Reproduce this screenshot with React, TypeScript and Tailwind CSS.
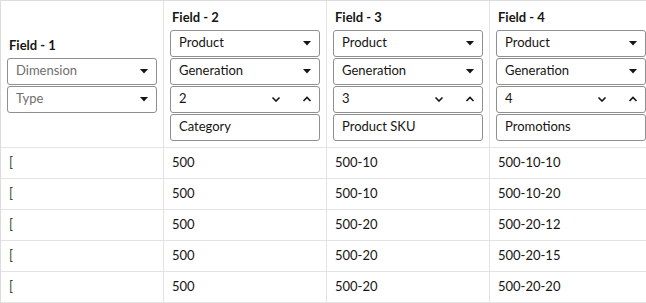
import React from 'react';

type Field = {
  label: string;
  rows: { kind: 'select' | 'number' | 'text'; value: string; placeholder?: boolean }[];
};

const fields: Field[] = [
  {
    label: 'Field - 1',
    rows: [
      { kind: 'select', value: 'Dimension', placeholder: true },
      { kind: 'select', value: 'Type', placeholder: true },
    ],
  },
  {
    label: 'Field - 2',
    rows: [
      { kind: 'select', value: 'Product' },
      { kind: 'select', value: 'Generation' },
      { kind: 'number', value: '2' },
      { kind: 'text', value: 'Category' },
    ],
  },
  {
    label: 'Field - 3',
    rows: [
      { kind: 'select', value: 'Product' },
      { kind: 'select', value: 'Generation' },
      { kind: 'number', value: '3' },
      { kind: 'text', value: 'Product SKU' },
    ],
  },
  {
    label: 'Field - 4',
    rows: [
      { kind: 'select', value: 'Product' },
      { kind: 'select', value: 'Generation' },
      { kind: 'number', value: '4' },
      { kind: 'text', value: 'Promotions' },
    ],
  },
];

const data = [
  ['[', '500', '500-10', '500-10-10'],
  ['[', '500', '500-10', '500-10-20'],
  ['[', '500', '500-20', '500-20-12'],
  ['[', '500', '500-20', '500-20-15'],
  ['[', '500', '500-20', '500-20-20'],
];

function Caret() {
  return (
    <svg width="10" height="6" viewBox="0 0 10 6" className="shrink-0">
      <path d="M1 1h8L5 5.5z" fill="#161513" />
    </svg>
  );
}

function Chevron({ up }: { up?: boolean }) {
  return (
    <svg width="10" height="6" viewBox="0 0 10 6" className="shrink-0">
      <path
        d={up ? 'M1.5 5L5 1.5 8.5 5' : 'M1.5 1.5L5 5 8.5 1.5'}
        fill="none"
        stroke="#161513"
        strokeWidth="1.6"
      />
    </svg>
  );
}

function Control({ row }: { row: Field['rows'][number] }) {
  return (
    <div className="flex h-[27px] w-[150px] items-center rounded-[3px] border border-[#8f8f8f] bg-white pl-2 pr-[7px]">
      <span className={'flex-1 truncate ' + (row.placeholder ? 'text-[#6f6e6c]' : 'text-[#161513]')}>
        {row.value}
      </span>
      {row.kind === 'select' && <Caret />}
      {row.kind === 'number' && (
        <div className="flex items-center gap-[21px]">
          <Chevron />
          <Chevron up />
        </div>
      )}
    </div>
  );
}

export default function App() {
  return (
    <div
      className="h-[303px] w-[646px] overflow-hidden bg-white text-[13px] text-[#161513]"
      style={{ fontFamily: 'Lato, "Noto Sans", sans-serif' }}
    >
      <div className="w-[653px] border-l border-t border-[#dcdcdc]">
        <div className="flex border-b border-[#e3e3e3]">
          {fields.map((f) => (
            <div
              key={f.label}
              className="flex h-[146px] w-[163px] shrink-0 flex-col justify-center border-r border-[#e3e3e3] px-[6px]"
            >
              <div className="mb-1 h-[18px] pl-[2px] font-bold leading-[18px]">{f.label}</div>
              <div className="flex flex-col gap-px">
                {f.rows.map((r, i) => (
                  <Control key={i} row={r} />
                ))}
              </div>
            </div>
          ))}
        </div>
        {data.map((row, i) => (
          <div key={i} className="flex border-b border-[#e3e3e3]">
            {row.map((c, j) => (
              <div
                key={j}
                className={
                  'flex h-[30px] w-[163px] shrink-0 items-center border-r border-[#e3e3e3] pl-[8px] ' +
                  (j === 0 ? 'text-[#2f4a1c]' : '')
                }
              >
                {c}
              </div>
            ))}
          </div>
        ))}
      </div>
    </div>
  );
}
